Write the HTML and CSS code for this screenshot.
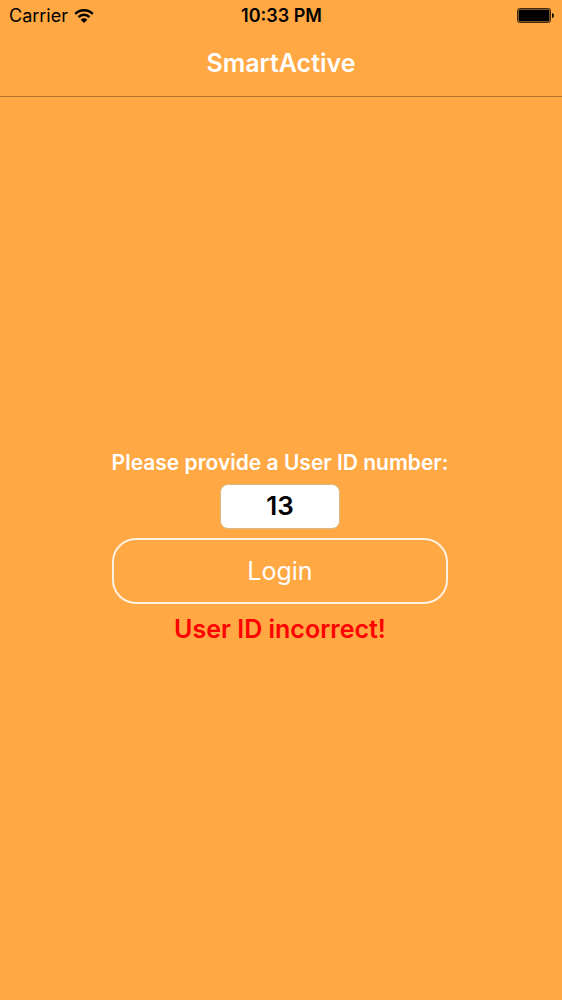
FILE: index.html
```html
<!DOCTYPE html>
<html lang="en">
<head>
<meta charset="utf-8">
<meta name="viewport" content="width=device-width, initial-scale=1">
<title>SmartActive</title>
<link rel="stylesheet" href="styles.css">
</head>
<body>
<header class="top">
  <div class="status">
    <div class="carrier">
      <span>Carrier</span>
      <svg class="wifi" viewBox="0 0 20 14" aria-hidden="true">
        <path d="M1.3 4.9a12.4 12.4 0 0 1 17.4 0M4.5 8.1a7.8 7.8 0 0 1 11 0" fill="none" stroke="#000" stroke-width="2.5"/>
        <path d="M10 14 6.7 10.7a4.7 4.7 0 0 1 6.6 0z"/>
      </svg>
    </div>
    <time class="clock">10:33 PM</time>
    <svg class="battery" viewBox="0 0 37 15" aria-hidden="true">
      <rect x="0.5" y="0.5" width="33" height="14" rx="2" fill="none" stroke="#3d2810"/>
      <rect x="1.5" y="1.5" width="31" height="12" rx="1"/>
      <path d="M35 5q2 0.5 2 2.5t-2 2.5z"/>
    </svg>
  </div>
  <h1 class="title">SmartActive</h1>
</header>
<main class="content">
  <form class="login">
    <label class="prompt" for="user-id">Please provide a User ID number:</label>
    <input class="user-id" id="user-id" type="text" inputmode="numeric" value="13">
    <button class="submit" type="button">Login</button>
    <p class="error" role="alert">User ID incorrect!</p>
  </form>
</main>
</body>
</html>
```
FILE: styles.css
```css
* {
  box-sizing: border-box;
}

body {
  margin: 0;
  min-height: 100vh;
  display: flex;
  flex-direction: column;
  background: #ffa844;
  color: #000;
  font-family: Inter, "Liberation Sans", sans-serif;
}

.top {
  border-bottom: 1px solid #b37630;
}

.status {
  display: grid;
  grid-template-columns: 1fr auto 1fr;
  align-items: center;
  height: 31px;
  padding: 0 8px 0 9px;
  font-size: 18px;
}

.carrier {
  display: flex;
  align-items: center;
  gap: 6px;
}

.wifi {
  width: 20px;
  height: 14px;
}

.clock {
  font-weight: 600;
}

.battery {
  width: 37px;
  height: 15px;
  justify-self: end;
}

.title {
  margin: 0;
  color: #fff;
  font-size: 25px;
  font-weight: 600;
  line-height: 65px;
  text-align: center;
}

.content {
  flex: 1;
  display: flex;
  align-items: center;
  justify-content: center;
  padding: 0 2px 6px 0;
}

.login {
  display: flex;
  flex-direction: column;
  align-items: center;
}

.prompt {
  color: #fff;
  font-size: 21px;
  font-weight: 600;
  line-height: 32px;
}

.user-id {
  width: 120px;
  height: 45px;
  margin: 5px 0 9px;
  padding: 0 0 2px;
  border: 1px solid #d9b98c;
  border-radius: 8px;
  background: #fff;
  color: #000;
  font: 600 26px Inter, "Liberation Sans", sans-serif;
  text-align: center;
}

.submit {
  width: 100%;
  height: 66px;
  border: 2px solid rgba(255, 255, 255, 0.85);
  border-radius: 24px;
  background: transparent;
  color: #fff;
  font: 400 25px Inter, "Liberation Sans", sans-serif;
}

.error {
  margin: 9px 0 0;
  color: #f00;
  font-size: 25px;
  font-weight: 600;
  line-height: 32px;
}
```
